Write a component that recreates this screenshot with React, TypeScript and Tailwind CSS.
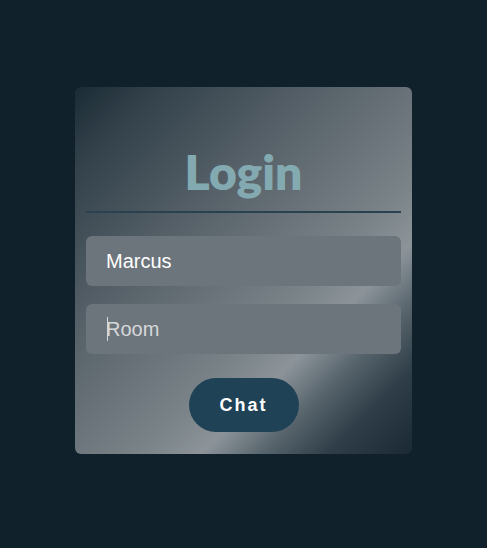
import React from "react";

export default function App() {
  return (
    <div className="min-h-[548px] w-full bg-[#11212b] flex justify-center pt-[87px]">
      <div className="w-[337px] h-[367px] rounded-[6px] pl-[11px] pr-[11px] pt-[61px] flex flex-col items-stretch bg-[linear-gradient(135deg,#1b2b35_0%,#33424b_12%,#525d65_32%,#6b747a_50%,#7b8489_62%,#8c949a_70%,#56636b_79%,#2f3e48_88%,#1a2933_100%)]">
        <h1 className="text-center text-[48px] leading-[48px] font-extrabold text-[#84aab1] font-['Lato','Open_Sans',sans-serif]">
          Login
        </h1>
        <div className="mt-[15px] h-[2px] bg-[#2a4250]" />
        <input
          className="mt-[23px] h-[50px] w-full rounded-[6px] bg-[#6c757b] px-[20px] text-[20px] text-white outline-none placeholder:text-[#d5d8da] font-['Liberation_Sans',Arial,sans-serif]"
          defaultValue="Marcus"
        />
        <div className="relative mt-[18px]">
          <input
            className="h-[50px] w-full rounded-[6px] bg-[#6c757b] px-[20px] text-[20px] text-white outline-none placeholder:text-[#d5d8da] caret-transparent font-['Liberation_Sans',Arial,sans-serif]"
            placeholder="Room"
          />
          <span className="pointer-events-none absolute left-[21px] top-[13px] h-[24px] w-px bg-[#d3d7d9]" />
        </div>
        <div className="mt-[24px] flex justify-center">
          <button className="h-[54px] w-[110px] rounded-full bg-[#1f4256] text-white text-[18px] font-bold tracking-[2px] font-['Liberation_Sans',Arial,sans-serif]">
            Chat
          </button>
        </div>
      </div>
    </div>
  );
}
